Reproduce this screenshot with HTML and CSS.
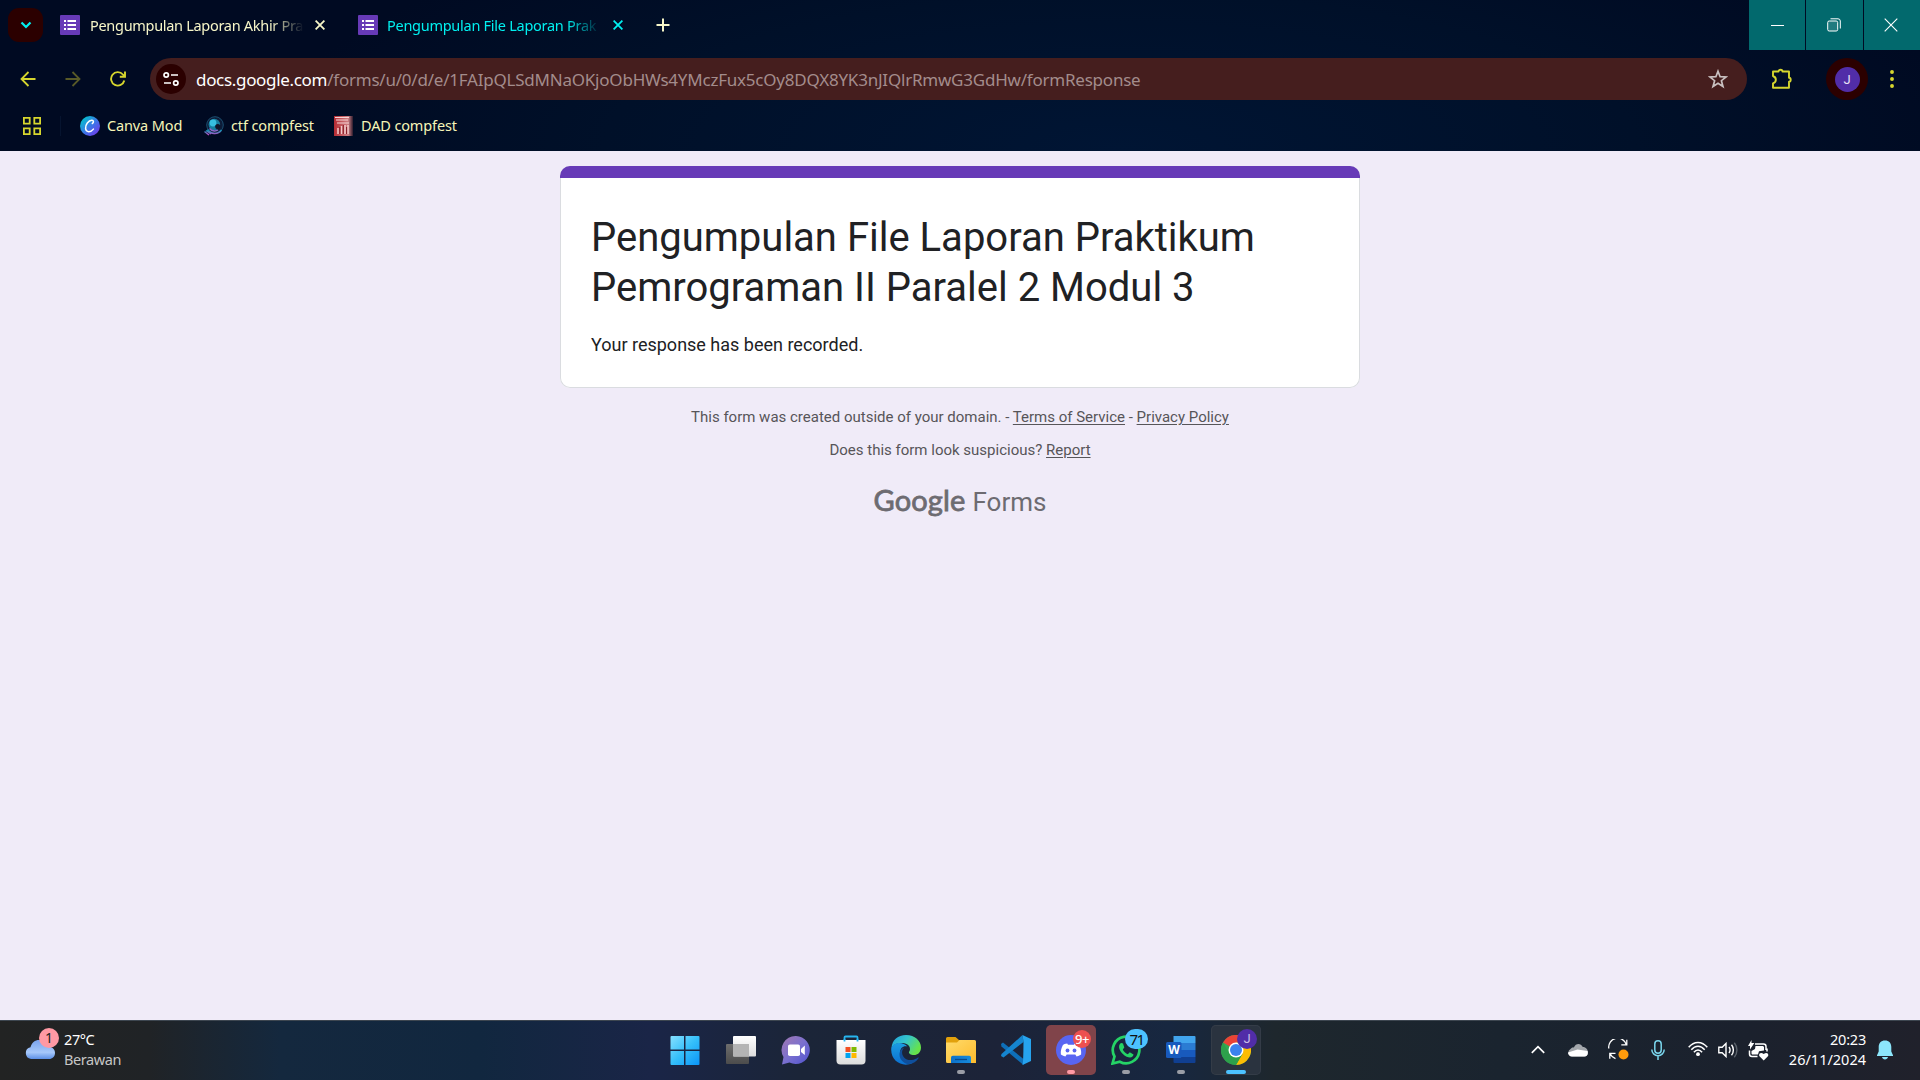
FILE: index.html
```html
<!DOCTYPE html>
<html lang="id">
<head>
<meta charset="utf-8">
<title>Pengumpulan File Laporan Praktikum Pemrograman II Paralel 2 Modul 3</title>
<link rel="stylesheet" href="styles.css">
</head>
<body>
<svg width="0" height="0" class="defs">
  <defs>
    <symbol id="forms" viewBox="0 0 20 20"><rect width="20" height="20" rx="1" fill="#673ab7"/><path d="M4 5h2v2H4zM7.500 5H16v2H7.500zM4 9h2v2H4zM7.500 9H16v2H7.500zM4 13h2v2H4zM7.500 13H16v2H7.500z" fill="#fff"/></symbol>
    <symbol id="cross" viewBox="0 0 10 10"><path d="M.6.6l8.800 8.800M9.400.6L.6 9.400" stroke="currentColor" stroke-width="1.800"/></symbol>
    <linearGradient id="gCanva" x1="0" y1="0" x2="1" y2="1"><stop offset=".1" stop-color="#00c4cc"/><stop offset=".55" stop-color="#3f72e8"/><stop offset="1" stop-color="#7d2ae8"/></linearGradient>
    <linearGradient id="gCtf" x1="0" y1="0" x2="0" y2="1"><stop offset=".2" stop-color="#1a8fb4"/><stop offset="1" stop-color="#c54ac8"/></linearGradient>
    <linearGradient id="gDad" x1="0" y1="0" x2="1" y2="0"><stop offset="0" stop-color="#b52a32"/><stop offset=".75" stop-color="#d08084"/><stop offset="1" stop-color="#2c1a2c"/></linearGradient>
    <linearGradient id="gWin" x1="0" y1="0" x2="1" y2="1"><stop offset="0" stop-color="#86e0ff"/><stop offset=".5" stop-color="#35bffa"/><stop offset="1" stop-color="#0a94f8"/></linearGradient>
    <linearGradient id="gCloud" x1="0" y1="0" x2="0" y2="1"><stop offset="0" stop-color="#79a3ee"/><stop offset=".65" stop-color="#a6c8fa"/><stop offset="1" stop-color="#5c8fe6"/></linearGradient>
    <linearGradient id="gChat" x1="0" y1="0" x2="1" y2="1"><stop offset="0" stop-color="#a277b0"/><stop offset=".5" stop-color="#7a70cf"/><stop offset="1" stop-color="#4f52cf"/></linearGradient>
    <linearGradient id="gGrey" x1="0" y1="0" x2="0" y2="1"><stop offset="0" stop-color="#6d6d6d"/><stop offset="1" stop-color="#4c4c4c"/></linearGradient>
    <linearGradient id="gBag" x1="0" y1="0" x2="0" y2="1"><stop offset="0" stop-color="#fff"/><stop offset="1" stop-color="#dcdcdc"/></linearGradient>
    <linearGradient id="gEdge" x1="0" y1="0" x2="1" y2=".5"><stop offset="0" stop-color="#1fa0df"/><stop offset=".5" stop-color="#35c5cc"/><stop offset="1" stop-color="#66e34a"/></linearGradient>
    <linearGradient id="gEdge2" x1="0" y1="0" x2="0" y2="1"><stop offset="0" stop-color="#1b9de2"/><stop offset="1" stop-color="#0b6fd0"/></linearGradient>
    <linearGradient id="gFold" x1="0" y1="0" x2="1" y2="1"><stop offset="0" stop-color="#ffdb6b"/><stop offset="1" stop-color="#fdbb2c"/></linearGradient>
    <linearGradient id="gFold2" x1="0" y1="0" x2="1" y2="0"><stop offset="0" stop-color="#0d71c9"/><stop offset="1" stop-color="#168bdc"/></linearGradient>
  </defs>
</svg>

<header class="browser">
  <div class="tabstrip">
    <div class="tab-search"><svg width="12" height="8" viewBox="0 0 12 8"><path d="M1.500 1.500L6 6l4.500-4.500" fill="none" stroke="#00f0f0" stroke-width="2.200"/></svg></div>
    <div class="tab">
      <svg class="fav"><use href="#forms"/></svg>
      <span class="tab-title">Pengumpulan Laporan Akhir Pra</span>
      <svg class="close"><use href="#cross"/></svg>
    </div>
    <div class="tab active">
      <svg class="fav"><use href="#forms"/></svg>
      <span class="tab-title">Pengumpulan File Laporan Prak</span>
      <svg class="close"><use href="#cross"/></svg>
    </div>
    <svg class="newtab" width="14" height="14" viewBox="0 0 14 14"><path d="M7 .5v13M.5 7h13" stroke="#f6f6c8" stroke-width="2"/></svg>
    <div class="winbtns">
      <div><svg width="13" height="13" viewBox="0 0 13 13"><path d="M0 6.500h13" stroke="#fff"/></svg></div>
      <div><svg width="14" height="14" viewBox="0 0 14 14" fill="none" stroke="#fff"><rect x=".7" y="3" width="10" height="10" rx="1.500" fill="#ffffff20"/><path d="M3.500.8H11A2.300 2.300 0 0 1 13.300 3v7.500"/></svg></div>
      <div><svg width="14" height="14" viewBox="0 0 14 14"><path d="M.7.7l12.600 12.600M13.300.7L.7 13.300" stroke="#fff" stroke-width="1.100"/></svg></div>
    </div>
  </div>

  <div class="toolbar">
    <svg class="nav" width="16" height="16" viewBox="0 0 16 16"><path d="M15.500 8H2M8.500 1L1.500 8l7 7" fill="none" stroke="#d6d62e" stroke-width="1.800"/></svg>
    <svg class="nav" width="16" height="16" viewBox="0 0 16 16"><path d="M.5 8H14M7.500 1l7 7-7 7" fill="none" stroke="#585a28" stroke-width="1.800"/></svg>
    <svg class="nav reload" width="16" height="16" viewBox="0 0 16 16"><path d="M14.300 9.500A6.700 6.700 0 1 1 12.900 3.500L14.500 5.300M15 .5v5.300H9.800" fill="none" stroke="#d6d62e" stroke-width="1.900"/></svg>
    <div class="omnibox">
      <div class="site"><svg width="16" height="16" viewBox="0 0 16 16" fill="none" stroke="#fff" stroke-width="1.700"><circle cx="3.200" cy="4" r="2.200"/><path d="M8 4h7M1 12h7"/><circle cx="12.800" cy="12" r="2.200"/></svg></div>
      <div class="url"><span class="host">docs.google.com</span><span class="path">/forms/u/0/d/e/1FAIpQLSdMNaOKjoObHWs4YMczFux5cOy8DQX8YK3nJIQlrRmwG3GdHw/formResponse</span></div>
      <svg class="star" width="20" height="20" viewBox="0 0 20 20"><path d="M10 2.200l2.100 5.500 6 .3-4.700 3.700 1.600 5.800-5-3.300-5 3.300 1.600-5.800L1.900 8l6-.3z" fill="none" stroke="#c9c1c1" stroke-width="1.700"/></svg>
    </div>
    <svg class="ext" width="22" height="22" viewBox="0 0 22 22"><path d="M2 3.500h5.500a2 1.700 0 0 1 4 0H18v6.300a1.700 2 0 0 1 0 4v6H2v-4.500c3.800-1.500 3.800-5.800 0-7.300z" fill="none" stroke="#d6d62e" stroke-width="1.900" stroke-linejoin="round"/></svg>
    <div class="profile"><span>J</span></div>
    <svg class="menu" width="4" height="18" viewBox="0 0 4 18" fill="#d6d62e"><circle cx="2" cy="2" r="1.950"/><circle cx="2" cy="9" r="1.950"/><circle cx="2" cy="16" r="1.950"/></svg>
  </div>

  <div class="bookmarks">
    <svg class="apps" width="18" height="18" viewBox="0 0 18 18" fill="none" stroke="#d6d62e" stroke-width="1.800"><path d="M.9.9h5.800v5.800H.9zM11.300.9h5.800v5.800h-5.800zM.9 11.300h5.800v5.800H.9zM11.300 11.300h5.800v5.800h-5.800z"/></svg>
    <i class="sep"></i>
    <div class="bm b1"><svg width="20" height="20" viewBox="0 0 20 20"><circle cx="10" cy="10" r="10" fill="url(#gCanva)"/><path d="M12.300 7.500c1.600-1 1.600-3.300-.5-3.200C8.500 4.400 5.200 8.700 5.600 12.500c.4 4.200 5 4.200 7.800.6" fill="none" stroke="#fff" stroke-width="1.500" stroke-linecap="round"/></svg><span>Canva Mod</span></div>
    <div class="bm b2"><svg width="20" height="20" viewBox="0 0 20 20"><circle cx="11" cy="9" r="8.300" fill="#0d1c38" stroke="#1b4f70" stroke-width="1"/><path d="M17.500 14A8.500 8.500 0 0 1 3.500 13.500M.5 15.500l4.500 3.500M2 14.500l5 3.500" fill="none" stroke="url(#gCtf)" stroke-width="1.500"/><circle cx="10.300" cy="8.500" r="5.800" fill="#167c9e"/><circle cx="9" cy="7" r="3.400" fill="#36bfe0"/><circle cx="13.800" cy="10.500" r="2.600" fill="#10152a"/><path d="M5.500 12.500c3 3.500 7 2.500 8.500 1.500" fill="none" stroke="#8b6ccc" stroke-width="1.400"/></svg><span>ctf compfest</span></div>
    <div class="bm b3"><svg width="19" height="20" viewBox="0 0 19 20"><rect width="19" height="20" fill="url(#gDad)"/><path d="M1 1.500h14M2 4h12M3 7h12" stroke="#f6d5d5" stroke-width="1.200"/><path d="M4 18v-6M7.500 18v-8M11 18V9M14 18v-9" stroke="#f3caca" stroke-width="1.500"/><path d="M5.800 18v-7M9.300 18V9M12.600 18v-7" stroke="#851923"/></svg><span>DAD compfest</span></div>
  </div>
</header>

<main class="page">
  <section class="card">
    <h1>Pengumpulan File Laporan Praktikum<br>Pemrograman II Paralel 2 Modul 3</h1>
    <p>Your response has been recorded.</p>
  </section>
  <p class="note n1">This form was created outside of your domain. - <u>Terms of Service</u> - <u>Privacy Policy</u></p>
  <p class="note n2">Does this form look suspicious? <u>Report</u></p>
  <div class="logo"><span class="google">Google</span><span class="forms">Forms</span></div>
</main>

<footer class="taskbar">
  <div class="weather">
    <div class="wicon"><svg width="30" height="20" viewBox="0 0 30 20"><path d="M6 19a6 6 0 0 1-.5-11.800C7 2.500 10 0 14 0c5 0 8 3 8.500 6.500C27 6.500 30 9 30 13c0 3.500-2.500 6-6 6z" fill="url(#gCloud)"/></svg><b>1</b></div>
    <div class="wtext"><span class="temp">27°C</span><span class="cond">Berawan</span></div>
  </div>

  <div class="dock">
    <div class="app start"><svg viewBox="0 0 30 30"><path d="M.5 2A1 1 0 0 1 1.500 1H14v13.500H.5zM15.500 1H28.500a1 1 0 0 1 1 1v12.500h-14zM.5 16H14v14H1.500a1 1 0 0 1-1-1zM15.500 16h14v13a1 1 0 0 1-1 1h-13z" fill="url(#gWin)"/></svg></div>
    <div class="app"><svg viewBox="0 0 30 30"><rect x="0" y="9" width="23" height="20" rx="1" fill="url(#gGrey)"/><rect x="7" y="1" width="23" height="20.500" rx="1" fill="url(#gBag)"/><path d="M7 9h16v12.500H8a1 1 0 0 1-1-1z" fill="#b4b4b4"/></svg></div>
    <div class="app"><svg viewBox="0 0 30 30"><path d="M15 1a14 14 0 1 1-6.500 26.500L1 29.500 2.500 22A14 14 0 0 1 15 1z" fill="url(#gChat)"/><rect x="7" y="9.500" width="12" height="11.500" rx="1.800" fill="#fff"/><path d="M20 14l3.800-3.500v9.500L20 17z" fill="#fff"/></svg></div>
    <div class="app"><svg viewBox="0 0 30 30"><path d="M8.500 7V2.500a1 1 0 0 1 1-1h11a1 1 0 0 1 1 1V7" fill="none" stroke="#27b5ef" stroke-width="1.800"/><path d="M.5 5h29v20.500a4 4 0 0 1-4 4h-21a4 4 0 0 1-4-4z" fill="url(#gBag)"/><path d="M8.500 6.500V4M21.500 6.500V4" stroke="#27b5ef" stroke-width="1.800"/><path d="M9.500 12h5v5h-5z" fill="#f25022"/><path d="M15.500 12h5v5h-5z" fill="#7fba00"/><path d="M9.500 18h5v5h-5z" fill="#00a4ef"/><path d="M15.500 18h5v5h-5z" fill="#ffb900"/></svg></div>
    <div class="app"><svg viewBox="0 0 30 30"><path d="M.5 13C1 5 7 0 15 0c9 0 15 6 15 12.500 0 5-3.500 7.500-7 7.500-3.500 0-5.500-1.500-5-3 2.500-3 .5-8.500-6-9C6.500 7.500 2 9.500.5 13z" fill="url(#gEdge)"/><path d="M.3 13C2 7 12 6 16.500 11.500c-5-1.500-9 3-6.500 9 2.500 5 7 8 11.500 7.500C12 33-1 26.500.3 13z" fill="url(#gEdge2)"/><path d="M13.500 12.500C8 17 12.500 26 20.500 25c3-.3 4.500-1.200 6.500-2.500.5-.3 1 0 .5.800C24 29 17.500 30.500 13 27.500 6 23 8 14 13.500 12.500z" fill="#0f4f9c"/></svg></div>
    <div class="app run"><svg viewBox="0 0 30 30"><path d="M0 3.500A1.500 1.500 0 0 1 1.500 2h8L13 5h15v8H0z" fill="#e2a10c"/><path d="M0 7.500h11L13.500 5H28.500A1.500 1.500 0 0 1 30 6.500V28H1.500A1.500 1.500 0 0 1 0 26.500z" fill="url(#gFold)"/><path d="M5 28v-5.500A1.800 1.800 0 0 1 6.800 20.700H23.200A1.800 1.800 0 0 1 25 22.500V28z" fill="url(#gFold2)"/><path d="M9 24.500h12" stroke="#084a8c" stroke-width="1.300"/></svg></div>
    <div class="app"><svg viewBox="0 0 30 30"><path d="M0 9l2-1.600L22.500 24v6L.5 11.500z" fill="#0e6fb8"/><path d="M.5 19L21.500 0l1 7L2.500 22.600 0 21z" fill="#1585cf"/><path d="M21.500 0L30 4v22l-8.500 4c1-1 1-22 1-23z" fill="#26a3ee"/></svg></div>
    <div class="app alert run"><svg viewBox="0 0 30 30"><circle cx="15" cy="15" r="15" fill="#5865f2"/><path d="M11.200 8.500l.8 1.300h6l.8-1.300c2 .3 3.400.8 4.400 1.700 1.500 2.800 2.300 6 1.900 9.200-1.500 1.100-3 1.800-4.500 2.100l-1.300-2.100h-8.600l-1.300 2.100c-1.500-.3-3-1-4.500-2.100-.4-3.200.4-6.400 1.900-9.200 1-.9 2.400-1.400 4.400-1.700z" fill="#fff"/><ellipse cx="11.500" cy="15.500" rx="1.900" ry="2.100" fill="#5865f2"/><ellipse cx="18.500" cy="15.500" rx="1.900" ry="2.100" fill="#5865f2"/></svg><b class="badge red">9+</b></div>
    <div class="app run"><svg viewBox="0 0 30 30"><path d="M1.500 28.500l2-7A13.300 13.300 0 1 1 8.800 26.700z" fill="none" stroke="#25d366" stroke-width="2.700"/><path d="M10.500 8c-1 0-2.500 1.500-2.500 4 .5 5.500 7 10.500 11 10.500 2 0 3.500-1.500 3.500-3l-3.700-2.300-2 2c-2-.7-4.300-3-5-4.800l1.500-2-1.300-4z" fill="#25d366"/></svg><b class="badge cyan">71</b></div>
    <div class="app run"><svg viewBox="0 0 30 30"><path d="M7.500 1h21a1 1 0 0 1 1 1v6h-22z" fill="#41a5ee"/><path d="M7.500 8h22v7h-22z" fill="#2b7cd3"/><path d="M7.500 15h22v7h-22z" fill="#185abd"/><path d="M7.500 22h22v5a1 1 0 0 1-1 1h-20a1 1 0 0 1-1-1z" fill="#103f91"/><rect x="0" y="7" width="15.500" height="16" rx="1.500" fill="#185abd"/></svg><b class="w">W</b></div>
    <div class="app current"><svg viewBox="0 0 30 30"><circle cx="15" cy="15" r="15" fill="#34a853"/><path d="M15 15L2 7.500A15 15 0 0 1 28 7.500H15z" fill="#ea4335"/><path d="M28 7.500A15 15 0 0 1 15 30l6.500-11.300L15 7.500z" fill="#fbbc04"/><path d="M2 7.500L8.500 18.700 21.500 18.700 15 30A15 15 0 0 1 2 7.500z" fill="#2da04b"/><circle cx="15" cy="15" r="7.500" fill="#fff"/><circle cx="15" cy="15" r="6" fill="#3b82ee"/></svg><b class="badge violet">J</b></div>
  </div>

  <div class="tray">
    <svg class="chev" width="14" height="9" viewBox="0 0 14 9"><path d="M.8 7.800L7 1.600l6.200 6.200" fill="none" stroke="#fff" stroke-width="1.700"/></svg>
    <svg class="cloud" width="20" height="14" viewBox="0 0 20 14"><path d="M4 13.500A4 4 0 0 1 2.500 6C4 4.500 5 4.500 6 4.300 7.500.5 12.500-.5 14.800 4 18 4 20 6.500 20 9.500c0 2.500-1.500 4-4 4z" fill="#a3a7ac"/><path d="M4 13.500c-2.500 0-4-2-4-4l9.500-3L19.500 8c1 3-.5 5.500-3 5.500z" fill="#fff"/></svg>
    <svg class="sync" width="21" height="21" viewBox="0 0 21 21"><path d="M.8 9.500A9 9 0 0 1 18.300 5.500M18.800 .8v5h-5.500M7.500 19.600A9.500 9.500 0 0 1 2 14.500M7.500 14.300H1.800v5.500" fill="none" stroke="#fff" stroke-width="1.300"/><circle cx="15.500" cy="15.500" r="5" fill="#ff9c0c"/></svg>
    <svg class="mic" width="14" height="20" viewBox="0 0 14 20" fill="none" stroke="#7ad5ec" stroke-width="1.500"><rect x="3.800" y=".8" width="6.400" height="12.400" rx="3.200"/><path d="M.8 9.500a6.200 6.200 0 0 0 12.400 0M7 16v4"/></svg>
    <svg class="wifi" width="20" height="16" viewBox="0 0 20 16" fill="none" stroke="#fff" stroke-width="1.500"><path d="M.7 6.300C6-.2 14-.2 19.300 6.300M3.300 8.800c4-4.900 9.400-4.900 13.400 0M5.900 11.300c2.500-3.100 5.700-3.100 8.200 0"/><circle cx="10" cy="13.200" r="1.900" fill="#fff" stroke="none"/></svg>
    <svg class="vol" width="20" height="16" viewBox="0 0 20 16" fill="none" stroke="#fff" stroke-width="1.400"><path d="M.8 5.300h3.400L8 1.500v13l-3.800-3.800H.8zM11 5c1.300 1.800 1.300 4.200 0 6M13.500 2.800c2.500 3 2.500 7.400 0 10.400"/><path d="M16.300.8c3.500 4.200 3.500 10.200 0 14.400" stroke="#5b626b"/></svg>
    <svg class="bat" width="21" height="21" viewBox="0 0 21 21"><path d="M7 4h8.500A2.500 2.500 0 0 1 18 6.500V10M9.500 16.500H4A2.500 2.500 0 0 1 1.500 14V10.500M19 8.500v3" fill="none" stroke="#fff" stroke-width="1.500"/><path d="M7.500 6h7.500l1 1v3.500l-5 .8-1 3.200H4l-.5-1V11L7 9z" fill="#fff"/><path d="M3.500 0v3h2.800L2 9.500V6H0L3.500 0z" fill="#fff"/><path d="M15.700 20.500l-4.200-4.200c-1.300-2 .8-4.800 4.200-2.300 3.400-2.500 5.500.3 4.200 2.300z" fill="#fff"/></svg>
    <div class="clock"><span class="time">20:23</span><span class="date">26/11/2024</span></div>
    <svg class="bell" width="16" height="20" viewBox="0 0 16 20"><path d="M8 .5c4 0 6.300 2.700 6.300 6.500v4.500L16 15.300V16H0v-.7l1.700-3.800V7C1.700 3.200 4 .5 8 .5zM5 17h6c-.5 3.300-5.500 3.300-6 0z" fill="#8ce6fb"/></svg>
  </div>
</footer>
</body>
</html>
```
FILE: styles.css
```css
* { box-sizing: border-box; }
html, body { margin: 0; height: 100%; overflow: hidden; }
body {
  width: 1920px; height: 1080px;
  display: flex; flex-direction: column;
  background: #f0ebf8;
  font-family: "Noto Sans", "Open Sans", sans-serif;
  font-size: 14px;
  white-space: nowrap;
}
svg { display: block; flex: none; }
.defs { position: absolute; }

/* browser frame */
.browser {
  height: 151px; flex: none;
  display: flex; flex-direction: column;
  background: radial-gradient(ellipse 860px 260px at 1120px 150px, #001534, #001029 60%, transparent), #000a22;
}
.tabstrip { height: 50px; display: flex; align-items: center; padding-left: 8px; }
.tab-search {
  width: 35px; height: 34px; border-radius: 11px; background: #2b0000;
  display: flex; align-items: center; justify-content: center; margin-right: 17px;
}
.tab { display: flex; align-items: center; color: #f6f6c8; margin-right: 33px; }
.active { color: #00f0f0; margin-right: 33px; }
.fav { width: 20px; height: 20px; }
.tab-title {
  width: 215px; margin: 0 10px 0 10px; line-height: 20px;
  font-size: 14.500px; letter-spacing: -.3px;
  -webkit-mask-image: linear-gradient(90deg, #000 180px, transparent 214px);
  mask-image: linear-gradient(90deg, #000 180px, transparent 214px);
}
.active .tab-title { margin-left: 9px; letter-spacing: -.27px; }
.active .close { margin-left: 1px; }
.close { width: 10px; height: 10px; }
.winbtns { margin-left: auto; display: flex; gap: 1px; align-self: stretch; }
.winbtns div { width: 56px; background: #02696d; display: flex; align-items: center; justify-content: center; }
.winbtns div:nth-child(1) { padding-left: 1px; }
.winbtns div:nth-child(2) { width: 57px; padding-right: 2px; }
.winbtns div:nth-child(3) { padding-right: 2px; }

.toolbar { height: 58px; display: flex; align-items: center; padding-left: 20px; }
.nav { margin-right: 29px; }
.nav.reload { margin-right: 24px; }
.omnibox {
  width: 1597px; height: 42px; border-radius: 21px; background: #451e1e;
  display: flex; align-items: center; padding: 0 19px 0 6px;
}
.site { width: 30px; height: 30px; border-radius: 50%; background: #2b0000; display: flex; align-items: center; justify-content: center; }
.url { margin-left: 10px; padding-top: 1px; font-size: 17px; line-height: 24px; flex: 1; }
.host { color: #fff; letter-spacing: -.32px; }
.path { color: #a38c8c; letter-spacing: -.22px; }
.ext { margin-left: 24px; }
.profile {
  width: 42px; height: 42px; margin-left: 33px; border-radius: 50%; background: #2b0000;
  display: flex; align-items: center; justify-content: center;
}
.profile span {
  width: 25px; height: 25px; border-radius: 50%; background: #512da8; color: #e9e2f7;
  font: 13px/25px Roboto, sans-serif; text-align: center;
}
.menu { margin-left: 22px; }

.bookmarks { height: 35px; display: flex; align-items: center; padding-left: 23px; color: #f6f6b8; font-size: 14.500px; letter-spacing: -.13px; }
.bm span { padding-bottom: 2px; }
.sep { width: 1px; height: 20px; margin: 0 19px; background: #06142f; }
.bm { display: flex; align-items: center; gap: 8px; }
.b1 { width: 124px; gap: 7px; }
.b2 { width: 130px; gap: 7px; }

/* form page */
.page { flex: 1; display: flex; flex-direction: column; align-items: center; padding-top: 15px; font-family: Roboto, sans-serif; }
.card {
  width: 800px; height: 222px; background: #fff;
  box-shadow: inset 0 0 0 1px #dadce0; border-radius: 10px;
  color: #202124; overflow: hidden; padding: 0 31px;
}
.card::before { content: ""; display: block; height: 12px; margin: 0 -31px; background: #673ab7; }
h1 { margin: 35px 0 0; font-size: 40px; line-height: 50px; font-weight: 400; }
.card p { margin: 19px 0 0; font-size: 18px; line-height: 25px; }
.note { margin: 0; font-size: 15px; line-height: 20px; color: #575559; }
.note u { text-underline-offset: 2px; }
.n1 { margin-top: 19px; }
.n2 { margin-top: 13px; }
.logo { display: flex; align-items: baseline; gap: 7px; margin-top: 19px; color: #6d6b71; line-height: 42px; }
.google { font: 400 29px/42px Lato, sans-serif; letter-spacing: .15px; -webkit-text-stroke: .8px #6d6b71; }
.forms { font: 26px/42px Roboto, sans-serif; }

/* taskbar */
.taskbar {
  height: 60px; flex: none; display: grid; grid-template-columns: 657px 606px 1fr;
  border-top: 1px solid #3d4650; color: #fff;
  background: linear-gradient(90deg, #222323 0, #202326 150px, #14283e 280px, #11273f 480px, #1a2547 650px, #1b2538 800px, #1c2338 1000px, #172740 1170px, #1e272d 1275px, #1a242f 1500px, #1b212d 1750px, #20212b 1920px);
}
.weather { display: flex; padding-left: 25px; }
.wicon { position: relative; width: 39px; padding-top: 19px; }
.wicon b {
  position: absolute; left: 14px; top: 7px; width: 20px; height: 20px; border-radius: 50%;
  background: #ff99a4; color: #222; font: 14px/20px "Noto Sans", sans-serif; text-align: center;
}
.wtext, .clock { display: flex; flex-direction: column; padding-top: 8px; line-height: 20px; }
.wtext { font-size: 14.500px; letter-spacing: -.4px; }
.cond { color: #c6c6c6; }

.dock { display: flex; gap: 5px; padding: 4px 0 0 4px; }
.app { position: relative; flex: none; width: 50px; height: 50px; padding: 10px; border-radius: 5px; }
.app > svg { width: 30px; height: 30px; }
.start { padding-left: 8.500px; }
.alert { background: #80444a; }
.current { background: #2a333f; box-shadow: inset 0 0 0 1px #343c47; }
.run::after, .current::after {
  content: ""; position: absolute; left: 21px; top: 45px; width: 8px; height: 4px; border-radius: 2px; background: #9a9da6;
}
.alert::after { background: #ff99a4; }
.current::after { left: 15px; width: 20px; background: #4cc2ff; }
.badge { position: absolute; border-radius: 10px; text-align: center; font-weight: 400; }
.red { left: 27px; top: 5px; width: 18px; height: 18px; background: #ed5050; color: #fff; font-size: 13px; letter-spacing: -.4px; line-height: 18px; font-weight: 500; }
.cyan { left: 24px; top: 4px; width: 23px; height: 20px; background: #4cc2ff; color: #111; font-size: 15px; letter-spacing: -1.500px; line-height: 20px; }
.violet { left: 26px; top: 4px; width: 20px; height: 20px; background: #512da8; color: #c9bde6; font: 13px/20px Roboto, sans-serif; }
.w { position: absolute; left: 10px; top: 16px; width: 16px; text-align: center; font: 700 12px/18px "Open Sans", sans-serif; }

.tray { display: flex; align-items: flex-start; padding-left: 268px; }
.chev { margin-top: 24px; }
.cloud { margin: 22px 0 0 23px; }
.sync { margin: 18px 0 0 20px; }
.mic { margin: 19px 0 0 22px; }
.wifi { margin: 20px 0 0 23px; }
.vol { margin: 21px 0 0 10px; }
.bat { margin: 19px 0 0 10px; }
.clock { width: 97px; align-items: flex-end; font-size: 14.500px; }
.time { letter-spacing: -.2px; }
.bell { margin: 19px 0 0 11px; }
```
